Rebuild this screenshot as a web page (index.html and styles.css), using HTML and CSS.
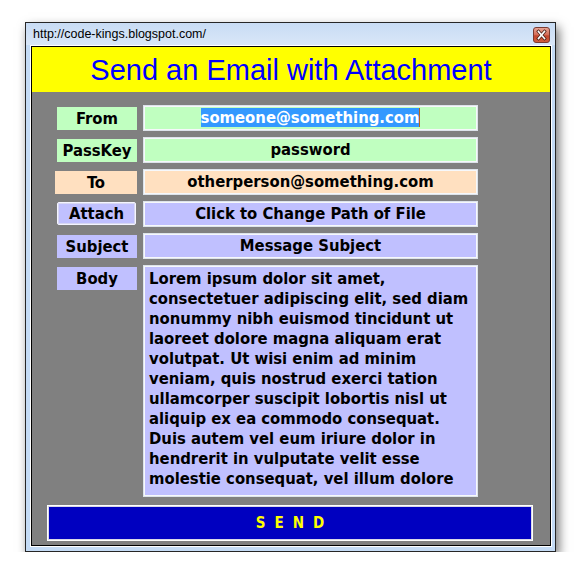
FILE: index.html
```html
<!DOCTYPE html>
<html>
<head>
<meta charset="utf-8">
<title>Send an Email with Attachment</title>
<link rel="stylesheet" href="styles.css">
</head>
<body>
<div class="window">
  <div class="titlebar">
    <span class="title">http://code-kings.blogspot.com/</span>
    <span class="close">
      <svg width="17" height="16" viewBox="0 0 17 16">
        <defs>
          <linearGradient id="cg" x1="0" y1="0" x2="0" y2="1">
            <stop offset="0" stop-color="#e9a898"/>
            <stop offset="0.5" stop-color="#d46a55"/>
            <stop offset="0.55" stop-color="#c2442c"/>
            <stop offset="1" stop-color="#d2603e"/>
          </linearGradient>
        </defs>
        <rect x="0.5" y="0.5" width="16" height="15" rx="2.5" fill="url(#cg)" stroke="#7a3a30"/>
        <path d="M5.5 4.5 L11.5 11.5 M11.5 4.5 L5.5 11.5" stroke="#4a2018" stroke-width="3.2" stroke-linecap="square"/>
        <path d="M5.5 4.5 L11.5 11.5 M11.5 4.5 L5.5 11.5" stroke="#ffffff" stroke-width="1.6" stroke-linecap="square"/>
      </svg>
    </span>
  </div>
  <div class="client">
    <div class="header">Send an Email with Attachment</div>
    <div class="panel">
      <div class="form">
        <div class="label green">From</div>
        <div class="field green"><span class="sel">someone@something.com</span></div>

        <div class="label green">PassKey</div>
        <div class="field green">password</div>

        <div class="label peach wide">To</div>
        <div class="field peach">otherperson@something.com</div>

        <div class="label lav button">Attach</div>
        <div class="field lav">Click to Change Path of File</div>

        <div class="label lav">Subject</div>
        <div class="field lav">Message Subject</div>

        <div class="label lav">Body</div>
        <div class="field lav body">Lorem ipsum dolor sit amet,
consectetuer adipiscing elit, sed diam
nonummy nibh euismod tincidunt ut
laoreet dolore magna aliquam erat
volutpat. Ut wisi enim ad minim
veniam, quis nostrud exerci tation
ullamcorper suscipit lobortis nisl ut
aliquip ex ea commodo consequat.
Duis autem vel eum iriure dolor in
hendrerit in vulputate velit esse
molestie consequat, vel illum dolore</div>
      </div>
      <div class="send">SEND</div>
    </div>
  </div>
</div>
</body>
</html>
```

FILE: styles.css
```css
html, body {
  margin: 0;
  padding: 0;
  background: #ffffff;
}

.window {
  box-sizing: border-box;
  margin: 22px 0 0 25px;
  width: 531px;
  height: 530px;
  border: 1px solid #262626;
  background: #c4dbf5;
  box-shadow: 3px 5px 10px rgba(0, 0, 0, 0.55);
  display: flex;
  flex-direction: column;
}

.titlebar {
  height: 22px;
  display: flex;
  align-items: flex-start;
  justify-content: space-between;
  padding: 0 5px 0 7px;
  background: linear-gradient(to bottom, #c8dcf4, #d9e7f8);
}

.title {
  font-family: "Liberation Sans", Arial, sans-serif;
  font-size: 12.5px;
  color: #000;
  line-height: 22px;
}

.close {
  margin-top: 4px;
  width: 17px;
  height: 16px;
  display: block;
}

.close svg {
  display: block;
}

.client {
  margin: 1px 4px 5px 5px;
  border: 1px solid #000;
  outline: 1px solid #ffffff;
  display: flex;
  flex-direction: column;
  height: 498px;
}

.header {
  height: 45px;
  background: #ffff00;
  color: #0000ff;
  font-family: "Liberation Sans", Arial, sans-serif;
  font-size: 29px;
  line-height: 47px;
  text-align: center;
}

.panel {
  flex: 1;
  background: #808080;
  padding: 13px 0 3px 0;
}

.form {
  margin-left: 25px;
  display: grid;
  grid-template-columns: 80px 335px;
  grid-template-rows: repeat(5, 26px) 232px;
  column-gap: 6px;
  row-gap: 6px;
}

.label, .field, .send {
  font-family: "DejaVu Sans Condensed", "DejaVu Sans", sans-serif;
  font-weight: bold;
  font-size: 16.5px;
  color: #000;
}

.label {
  box-sizing: border-box;
  margin-top: 2px;
  height: 23px;
  line-height: 23px;
  text-align: center;
  align-self: start;
}

.label.wide {
  width: 82px;
  justify-self: end;
}

.label.button {
  width: 79px;
  border: 1px solid #f4f4ff;
  box-shadow: inset 0 0 0 1px #d8d8f4;
  border-radius: 2px;
  line-height: 21px;
  margin-top: 1px;
}

.green { background: #c0ffc0; }
.peach { background: #ffe0c0; }
.lav { background: #c0c0ff; }

.field {
  box-sizing: border-box;
  border: 1px solid #dde3ea;
  box-shadow: inset 0 0 0 1px #f6f8fb;
  text-align: center;
  line-height: 24px;
  white-space: nowrap;
  overflow: hidden;
}

.sel {
  background: #3399ff;
  color: #ffffff;
  border-right: 1px solid #b4641e;
}

.field.body {
  text-align: left;
  white-space: pre;
  line-height: 20px;
  padding: 3px 4px 0 5px;
}

.send {
  box-sizing: border-box;
  margin: 8px 0 0 15px;
  width: 486px;
  height: 36px;
  background: #0000c0;
  border: 1px solid #ffffff;
  box-shadow: inset 0 0 0 1px #d8d8e8;
  color: #ffff00;
  font-size: 15px;
  letter-spacing: 9px;
  padding-left: 9px;
  text-align: center;
  line-height: 34px;
}
```
